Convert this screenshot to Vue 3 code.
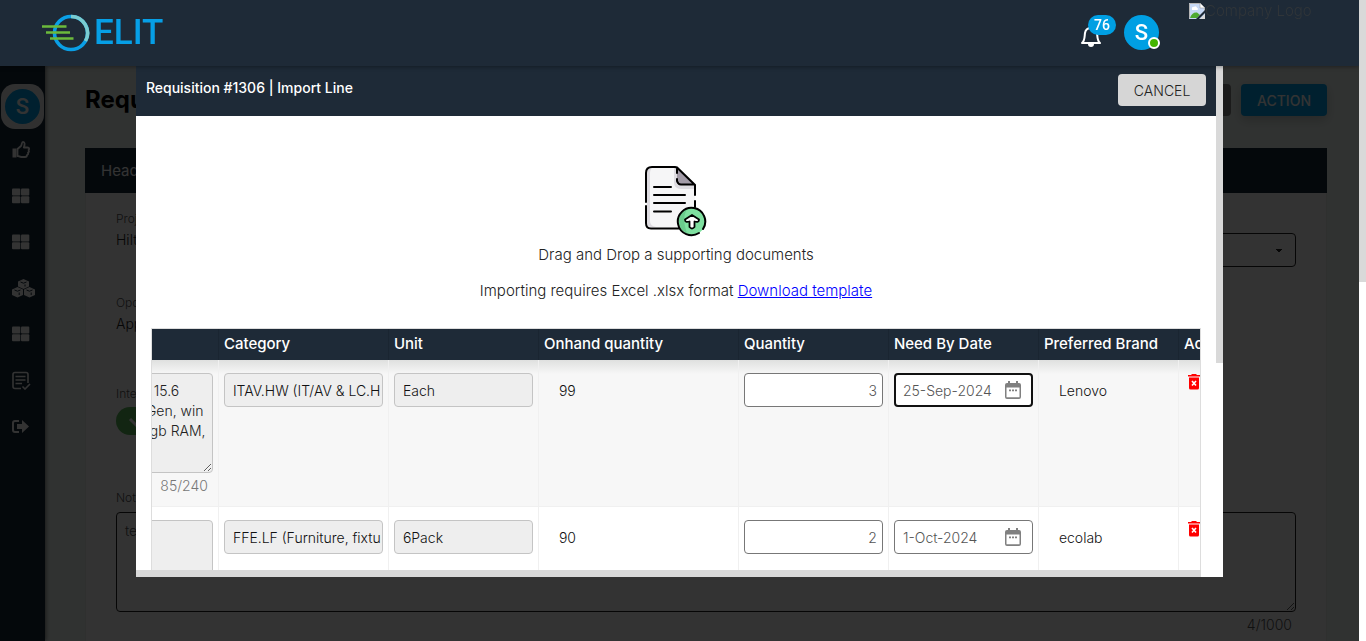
<script setup>
import { ref, onMounted } from 'vue'

const scroller = ref(null)
const columns = [
  { label: '', cls: 'c-desc' },
  { label: 'Category', cls: 'c-cat' },
  { label: 'Unit', cls: 'c-unit' },
  { label: 'Onhand quantity', cls: 'c-hand' },
  { label: 'Quantity', cls: 'c-qty' },
  { label: 'Need By Date', cls: 'c-date' },
  { label: 'Preferred Brand', cls: 'c-brand' },
  { label: 'Action', cls: 'c-act' },
]
const rows = ref([
  { desc: '  15.6\nGen, win\n gb RAM,', count: '85/240', category: 'ITAV.HW (IT/AV & LC.H', unit: 'Each', onhand: 99, qty: '3', date: '25-Sep-2024', brand: 'Lenovo', active: true },
  { desc: '', count: '', category: 'FFE.LF (Furniture, fixtures', unit: '6Pack', onhand: 90, qty: '2', date: '1-Oct-2024', brand: 'ecolab', active: false },
])
const notes = ref('test')

onMounted(() => {
  scroller.value.scrollLeft = 20
})
</script>

<template>
  <div class="app">
    <header class="topbar">
      <a class="logo" href="#" aria-label="ELIT">
        <svg width="48" height="40" viewBox="0 0 48 40" fill="none">
          <circle cx="29" cy="20" r="16.5" stroke="#0a9fe6" stroke-width="3.6" />
          <path d="M29 3.500A16.500 16.500 0 0 1 43.500 28" stroke="#7accd0" stroke-width="3.600" />
          <path d="M0 13.500H24.500M4 19.500H28M8 25.500H31.500" stroke="#6cba3c" stroke-width="2.400" />
        </svg>
        <span>ELIT</span>
      </a>
      <div class="tools">
        <button class="bell" aria-label="Notifications">
          <svg width="22" height="24" viewBox="0 0 22 24" fill="none" stroke="#fff" stroke-width="2">
            <path d="M2 19C5 16.500 4.500 12 5 9C5.600 5.500 8 4 11 4S16.400 5.500 17 9C17.500 12 17 16.500 20 19Z" stroke-linejoin="round" />
            <path d="M8 20a3 3 0 0 0 6 0z" fill="#fff" stroke="none" />
            <path d="M11 1.500V4" />
          </svg>
          <span class="badge">76</span>
        </button>
        <button class="avatar">S<i class="online"></i></button>
        <div class="company">
          <svg width="16" height="16" viewBox="0 0 16 16">
            <path d="M0 0H11L16 5V16H0Z" fill="#c6d8f5" />
            <path d="M.5 15.500V.5H11L15.500 5V9" fill="none" stroke="#b5b5b5" />
            <path d="M11 0V5H16Z" fill="#fff" stroke="#999" stroke-width=".6" />
            <path d="M3 6a1.500 1.500 0 0 1 2-2 1.700 1.700 0 0 1 3 1 1 1 0 0 1 0 2H3Z" fill="#fff" />
            <path d="M1 15C2 11 5 9 8 9.500L11 12 8 15Z" fill="#4faa32" />
            <path d="M7 16L16 7V10L10 16Z" fill="#1e2a36" />
            <path d="M11 16L16 11V16Z" fill="#d8d8d8" />
          </svg>
          <span>Company Logo</span>
        </div>
      </div>
    </header>

    <aside class="side">
      <button class="me" aria-label="Profile"><span>S</span></button>
      <nav>
        <a href="#" aria-label="Approvals">
          <svg width="20" height="20" viewBox="0 0 20 20" fill="none" stroke="#fff" stroke-width="1.800" stroke-linejoin="round"><path d="M5.500 9L9 6C10 4.500 9.500 1.800 11 1.800C13 1.800 13 4.500 11.800 7.500H15.500C17.500 7.500 17.500 9.500 16.500 10C17.300 11 17 12 16 12.600C16.500 13.800 16 14.700 15 15C15 16.500 14.200 17 13 17H9.500C7.500 17 7 16 5.500 16Z" /><path d="M.5 8.500H4.500V17.500H.5Z" fill="#fff" stroke="none" /></svg>
        </a>
        <a href="#" aria-label="Dashboard"><svg width="20" height="20" viewBox="0 0 20 20" fill="#fff"><rect x="0" y="2.500" width="8.300" height="7" rx="1" /><rect x="9" y="2.500" width="8.300" height="7" rx="1" /><rect x="0" y="10.200" width="8.300" height="7" rx="1" /><rect x="9" y="10.200" width="8.300" height="7" rx="1" /></svg></a>
        <a href="#" aria-label="Reports"><svg width="20" height="20" viewBox="0 0 20 20" fill="#fff"><rect x="0" y="2.500" width="8.300" height="7" rx="1" /><rect x="9" y="2.500" width="8.300" height="7" rx="1" /><rect x="0" y="10.200" width="8.300" height="7" rx="1" /><rect x="9" y="10.200" width="8.300" height="7" rx="1" /></svg></a>
        <a href="#" aria-label="Inventory">
          <svg width="24" height="20" viewBox="0 0 24 20"><g fill="#fff"><path d="M11.500 1L17 3.500V8.500L11.500 11 6 8.500V3.500Z" /><path d="M5.500 9L11 11.500V17L5.500 19.500 0 17V11.500Z" /><path d="M17.500 9L23 11.500V17L17.500 19.500 12 17V11.500Z" /></g><g fill="none" stroke="#16293a" stroke-width="1"><path d="M8.500 4L11.500 5.200 14.500 4M13 6.500V8.500M2.500 12L5.500 13.200 8.500 12M7.200 14.500V17M14.500 12L17.500 13.200 20.500 12M19.200 14.500V17" /></g></svg>
        </a>
        <a href="#" aria-label="Catalogue"><svg width="20" height="20" viewBox="0 0 20 20" fill="#fff"><rect x="0" y="2.500" width="8.300" height="7" rx="1" /><rect x="9" y="2.500" width="8.300" height="7" rx="1" /><rect x="0" y="10.200" width="8.300" height="7" rx="1" /><rect x="9" y="10.200" width="8.300" height="7" rx="1" /></svg></a>
        <a href="#" aria-label="Requisitions">
          <svg width="20" height="20" viewBox="0 0 20 20" fill="none" stroke="#fff" stroke-width="1.600"><path d="M16 13V4.500Q16 2.500 14 2.500H3Q1 2.500 1 4.500V16.500Q1 18.500 3 18.500H9M3.500 6.500H13.500M3.500 10H13.500M3.500 13.500H10M10.500 16.500L13 19 18 14" /></svg>
        </a>
        <a href="#" aria-label="Log out">
          <svg width="20" height="20" viewBox="0 0 20 20"><path d="M7 5H3Q1 5 1 7V14Q1 16 3 16H7" fill="none" stroke="#fff" stroke-width="2" /><path d="M5 8H10V4L17 10.500 10 17V13H5Z" fill="#fff" /></svg>
        </a>
      </nav>
    </aside>

    <main class="page">
      <div class="page-head">
        <h1>Requisition</h1>
        <div class="page-actions">
          <button class="btn-grey" aria-label="Back"></button>
          <button class="btn-blue">ACTION</button>
        </div>
      </div>
      <section class="card">
        <h2>Header</h2>
        <div class="card-body">
          <div class="fields">
            <div class="field"><span class="lbl">Project</span><span class="val">Hilton</span></div>
            <select aria-label="Type"><option></option></select>
          </div>
          <div class="field second"><span class="lbl">Opco</span><span class="val">App</span></div>
          <div class="field third">
            <label class="lbl" for="internal">Internal</label>
            <button id="internal" class="switch" role="switch" aria-checked="true">
              <svg width="18" height="18" viewBox="0 0 18 18" fill="none" stroke="#fff" stroke-width="3"><path d="M2 7L8 13 16 5" /></svg>
            </button>
          </div>
          <label class="lbl" for="notes">Notes</label>
          <textarea id="notes" v-model="notes"></textarea>
          <p class="counter">4/1000</p>
        </div>
      </section>
    </main>

    <div class="page-scroll"><i></i></div>

    <div class="overlay">
      <div class="modal" role="dialog" aria-labelledby="dlg-title">
        <div class="modal-main">
          <div class="modal-content">
            <div class="modal-head">
              <h3 id="dlg-title">Requisition #1306 | Import Line</h3>
              <button class="cancel">CANCEL</button>
            </div>
            <div class="drop">
              <svg width="64" height="72" viewBox="0 0 64 72" fill="none" stroke-linecap="round">
                <path d="M8 2H33L51 19V58Q51 63.500 46 63.500H7Q2 63.500 2 58V7Q2 2 8 2Z" fill="#f6f6f7" />
                <path d="M3 8V57Q3 62 8 62H12Q6 61 6 56V8Q6 4 9 2Q3 2 3 8Z" fill="#dedce1" />
                <path d="M30 3V17Q30 24 37 24H50V20H33V3Z" fill="#dedce1" />
                <path d="M33 2V15Q33 19.500 37 19.500H51Z" fill="#a39ca8" />
                <path d="M2 37V8Q2 2 8 2H31L33 2.500 51 20V30M33 3V8M33 14V16Q34 19.500 37 19.500H50M51 36V43M2 41V58Q2 63.500 7 63.500H35M10 22H27M10 30H41M10 38H41M10 46.500H27" stroke="#000" stroke-width="2" />
                <circle cx="48" cy="56" r="13.700" fill="#7fe0a0" />
                <path d="M38 65Q35 61 35 54Q36 46 44 43Q37 52 43 68Z" fill="#6acb8c" />
                <path d="M59 64A13.700 13.700 0 1 0 55 68" stroke="#000" stroke-width="2" />
                <path d="M48 50L55 54.500Q55 58 50.500 56.500V62Q48 65 45.500 62V56.500Q41 58 41 54.500Z" fill="#fff" stroke="#000" stroke-width="1.800" stroke-linejoin="round" />
              </svg>
              <p>Drag and Drop a supporting documents</p>
              <p>Importing requires Excel .xlsx format <a href="#">Download template</a></p>
            </div>
            <div ref="scroller" class="grid-wrap">
              <table>
                <colgroup><col v-for="c in columns" :key="c.cls" :class="c.cls" /></colgroup>
                <thead>
                  <tr><th v-for="c in columns" :key="c.cls">{{ c.label }}</th></tr>
                </thead>
                <tbody>
                  <tr v-for="r in rows" :key="r.brand">
                    <td><textarea v-model="r.desc" aria-label="Description" readonly></textarea><p class="chars">{{ r.count }}</p></td>
                    <td><input v-model="r.category" class="off" aria-label="Category" readonly /></td>
                    <td><input v-model="r.unit" class="off" aria-label="Unit" readonly /></td>
                    <td><span class="plain">{{ r.onhand }}</span></td>
                    <td><input v-model="r.qty" class="num" aria-label="Quantity" /></td>
                    <td>
                      <div class="date" :class="{ active: r.active }">
                        <input v-model="r.date" aria-label="Need by date" />
                        <svg width="16" height="18" viewBox="0 0 16 18"><path d="M2 2H3V0H5V2H11V0H13V2H14Q16 2 16 4V16Q16 18 14 18H2Q0 18 0 16V4Q0 2 2 2ZM1.500 6.500V16.300H14.500V6.500Z" fill="#808080" fill-rule="evenodd" /><path d="M4 8.500H6V10.300H4ZM7 8.500H9V10.300H7ZM10 8.500H12V10.300H10Z" fill="#808080" /></svg>
                      </div>
                    </td>
                    <td><span class="plain">{{ r.brand }}</span></td>
                    <td>
                      <button class="del" aria-label="Delete line">
                        <svg width="12" height="16" viewBox="0 0 12 16"><path d="M0 1H3L4 0H8L9 1H12V2.500H0Z" fill="#f00" /><path d="M1 3.500H11V14Q11 15.500 9.500 15.500H2.500Q1 15.500 1 14Z" fill="#f00" /><path d="M4 7L8 11.500M8 7L4 11.500" stroke="#fff" stroke-width="1.600" /></svg>
                      </button>
                    </td>
                  </tr>
                </tbody>
              </table>
            </div>
          </div>
          <div class="v-scroll"><i></i></div>
        </div>
        <div class="h-scroll"><i></i></div>
      </div>
    </div>
  </div>
</template>

<style>
body { overflow: hidden; }
</style>

<style scoped>
* { box-sizing: border-box; }
h1, h2, h3, p { margin: 0; }
button { border: 0; padding: 0; font: inherit; cursor: pointer; }
input, textarea, select { font: inherit; }
.app {
  height: 100vh;
  display: grid;
  grid-template: 66px 1fr / 45px 1fr 7px;
  overflow: hidden;
  font: 300 14px/20px Inter, "Liberation Sans", sans-serif;
  color: #222;
  background: #f1faf6;
}
.topbar {
  grid-column: 1 / 3;
  grid-row: 1;
  position: relative;
  z-index: 3;
  display: flex;
  justify-content: space-between;
  padding-left: 42px;
  background: #1e2a37;
  box-shadow: 0 1px 4px rgba(0, 0, 0, .35);
}
.logo { display: flex; align-items: center; gap: 4px; text-decoration: none; color: #069fe6; font: 500 35px/66px Roboto, sans-serif; }
.tools { display: flex; align-items: flex-start; }
.bell { position: relative; width: 22px; height: 24px; margin: 24px 22px 0 0; background: none; }
.bell svg { display: block; }
.badge { position: absolute; left: 8px; top: -9px; width: 28px; height: 20px; border-radius: 10px; background: #009fe3; color: #fff; font: 500 14px/20px Roboto, sans-serif; }
.avatar { position: relative; width: 35px; height: 35px; margin-top: 15px; border-radius: 50%; background: #009fe3; color: #fff; font: 500 22px/35px Roboto, sans-serif; }
.online { position: absolute; right: -1px; bottom: 1px; width: 12px; height: 12px; border: 2px solid #fff; border-radius: 50%; background: #43b500; }
.company { display: flex; align-items: center; width: 170px; height: 16px; margin: 3px 0 0 30px; color: #303539; font-size: 15px; }

.side { grid-column: 1; grid-row: 2; padding-top: 18px; background: #16293a; box-shadow: 1px 0 4px rgba(0, 0, 0, .5); z-index: 1; }
.me { display: grid; place-items: center; width: 43px; height: 45px; margin: 0 auto 11px; border-radius: 14px; background: #f0f0f0; }
.me span { width: 35px; height: 35px; border-radius: 50%; background: #00a0e8; color: #fff; font: 500 22px/35px Roboto, sans-serif; }
.side nav { display: flex; flex-direction: column; gap: 26px; padding-left: 12px; }
.side nav a { height: 20px; }
.side svg { display: block; }

.page { grid-column: 2; grid-row: 2; padding: 18px 32px 0 40px; min-height: 0; }
.page-head { display: flex; justify-content: space-between; height: 64px; }
h1 { font: 700 24px/32px Inter, sans-serif; color: #000; }
.page-actions { display: flex; gap: 10px; height: 32px; }
.page-actions button { width: 86px; border-radius: 4px; }
.btn-grey { background: #888; }
.btn-blue { background: #00a0e8; color: #fff; font-weight: 500; line-height: 34px; box-shadow: 0 4px 12px rgba(0, 0, 0, .2); }
.card { background: #fff; border: 1px solid #e8f0ec; border-top: 0; }
h2 { margin: 0 -1px; padding: 0 16px; font: 400 15px/45px Inter, sans-serif; color: #fff; background: #16293a; }
.card-body { padding: 16px 30px 60px; }
.fields { display: flex; justify-content: space-between; }
.field { display: flex; flex-direction: column; }
.lbl { font-size: 12px; line-height: 20px; color: #555; }
.val { line-height: 22px; }
select { width: 360px; height: 34px; margin: 24px 0 0; appearance: none; border: 1px solid #222; border-radius: 4px; background: linear-gradient(#222, #222) calc(100% - 13px) 15px / 6px 1px no-repeat, linear-gradient(#222, #222) calc(100% - 14px) 16px / 4px 1px no-repeat, linear-gradient(#222, #222) calc(100% - 15px) 17px / 2px 1px no-repeat #fff; }
.second { margin-top: 26px; }
.third { margin-top: 49px; align-items: flex-start; }
.switch { display: grid; place-items: center start; width: 60px; height: 28px; margin: 3px 0 53px; padding-left: 12px; border-radius: 14px; background: #5cb85c; }
.card-body > .lbl { display: block; }
#notes { display: block; width: 100%; height: 100px; margin-top: 4px; padding: 8px; border: 1px solid #222; border-radius: 4px; background: transparent; color: #555; }
.counter { padding: 3px 4px; text-align: right; color: #555; }

.page-scroll { grid-column: 3; grid-row: 1 / 3; z-index: 4; background: #fff; }
.page-scroll i { display: block; height: 44%; background: #d9d9d9; }

.overlay { position: fixed; inset: 0 7px 0 0; z-index: 2; display: grid; place-items: center; background: rgba(0, 0, 0, .8); }
.modal { display: flex; flex-direction: column; width: 80%; height: 80%; overflow: hidden; background: #fff; }
.modal-main { flex: 1; display: flex; min-height: 0; }
.modal-content { flex: 1; min-width: 0; overflow: hidden; }
.v-scroll { width: 7px; }
.v-scroll i { display: block; height: 59%; background: #d9d9d9; }
.h-scroll { height: 7px; padding-right: 22px; }
.h-scroll i { display: block; height: 7px; background: #d9d9d9; }
.modal-head { display: flex; justify-content: space-between; align-items: flex-start; height: 52px; padding: 10px 10px 0; background: #1e2a37; }
h3 { font: 500 14px/28px Inter, sans-serif; color: #fff; }
.cancel { width: 88px; height: 32px; border-radius: 4px; background: #d6d6d6; color: #222; line-height: 34px; }
.drop { display: flex; flex-direction: column; align-items: center; padding-top: 49px; }
.drop svg { display: block; margin-bottom: 8px; }
.drop p { margin-bottom: 16px; font-size: 15px; }
.drop a { color: #00f; }
.grid-wrap { margin: 11px 15px 0; border: 1px solid #ddd; overflow: hidden; }
table { width: 1107px; table-layout: fixed; border-collapse: separate; border-spacing: 0; }
.c-desc { width: 87px; }
.c-cat { width: 170px; }
.c-unit, .c-qty, .c-date { width: 150px; }
.c-hand { width: 200px; }
.c-brand { width: 140px; }
.c-act { width: 60px; }
th { height: 31px; padding: 0 5px 2px; text-align: left; font-size: 15px; font-weight: 500; color: #fff; background: #1e2a37; border-right: 1px solid #1a2531; white-space: nowrap; }
td { height: 147px; padding: 13px 5px 0; vertical-align: top; border-right: 1px solid #f0f0f0; border-bottom: 1px solid #f0f0f0; }
tbody tr:first-child td { background: linear-gradient(#dfe0df, #f7f7f7 14px); }
td textarea { display: block; width: 76px; height: 100px; padding: 7px 0 7px 8px; border: 1px solid #c4c4c4; border-radius: 4px; background: #eee; color: #222; white-space: pre; overflow: hidden; }
.chars { padding: 3px 5px; text-align: right; color: #777; }
td input { display: block; width: 100%; height: 34px; padding: 0 5px 0 8px; border: 1px solid #777; border-radius: 4px; background: #fff; color: #555; }
td input.off { padding-right: 1px; border-color: #c4c4c4; background: #eee; color: #111; }
td input.num { text-align: right; }
.date { display: flex; align-items: center; height: 34px; padding-right: 11px; border: 1px solid #777; border-radius: 4px; background: #fff; }
.date input { flex: 1; min-width: 0; height: 30px; border: 0; padding: 0 0 0 8px; background: none; }
.date.active { border: 2px solid #111; padding-right: 10px; }
.date.active input { padding-left: 7px; }
.plain { display: block; padding-left: 15px; line-height: 36px; color: #111; }
.del { display: block; margin: 1px 0 0 4px; background: none; }
.del svg { display: block; }
</style>
